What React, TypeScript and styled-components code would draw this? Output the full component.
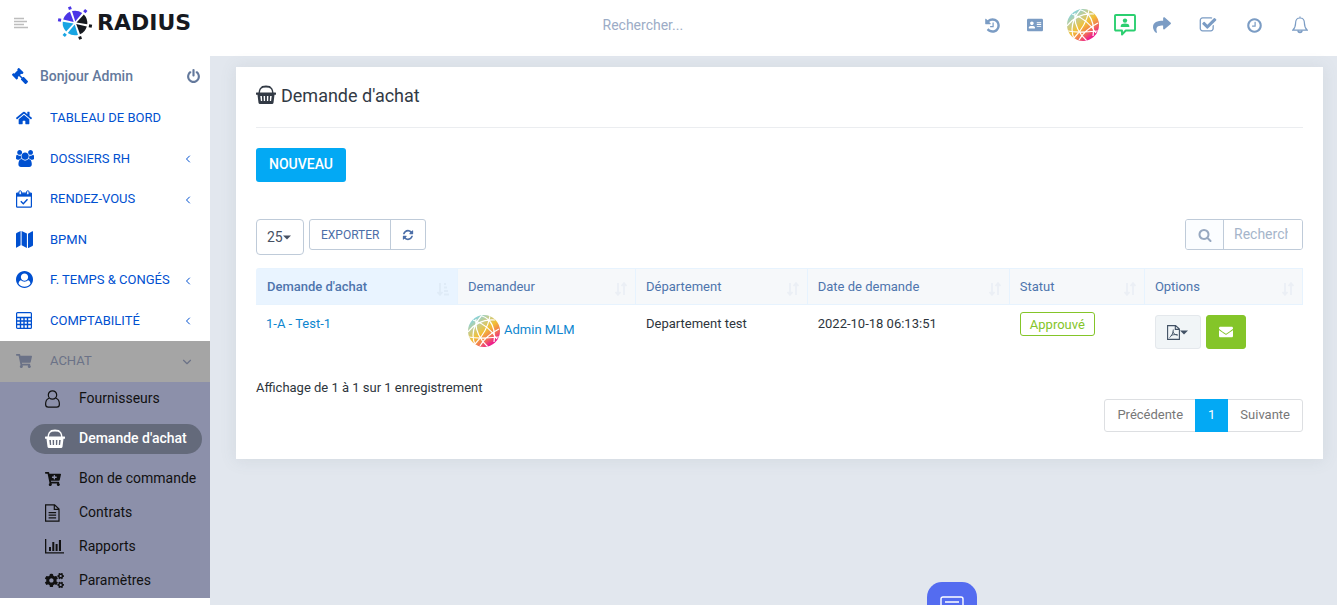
import React from "react";
import styled, { createGlobalStyle, css } from "styled-components";
import { FaGavel, FaShoppingCart, FaCartPlus, FaCogs, FaShare, FaAddressCard, FaHome, FaEnvelope } from "react-icons/fa";
import { FiChevronLeft, FiChevronDown } from "react-icons/fi";

const GlobalStyle = createGlobalStyle`
  *, *::before, *::after { box-sizing: border-box; }
  html { overflow: hidden; }
  body { margin: 0; background: #e2e7ee; color: #2d353c; font: 13px/1.5 Roboto, "Liberation Sans", sans-serif; }
  button, input, select { font: inherit; margin: 0; }
  button { cursor: pointer; }
  a { text-decoration: none; color: inherit; }
  ul { list-style: none; margin: 0; padding: 0; }
  svg { display: block; flex: none; }
`;

/* ---------- glyphs ---------- */

const Glyph = ({ d, size, box = 1792 }: { d: string; size: number; box?: number }) => (
  <svg width={(size * box) / 1792} height={size} viewBox={`0 0 ${box} 1792`} fill="currentColor" fillRule="evenodd" aria-hidden="true">
    <path d={d} />
  </svg>
);

const paths = {
  search:
    "M1216 832q0-185-131.5-316.5t-316.5-131.5-316.5 131.5-131.5 316.5 131.5 316.5 316.5 131.5 316.5-131.5 131.5-316.5zm512 832q0 52-38 90t-90 38q-54 0-90-38l-343-342q-179 124-399 124-143 0-273.5-55.5t-225-150-150-225-55.5-273.5 55.5-273.5 150-225 225-150 273.5-55.5 273.5 55.5 225 150 150 225 55.5 273.5q0 220-124 399l343 343q37 37 37 90z",
  refresh:
    "M1639 1056q0 5-1 7-64 268-268 434.5t-478 166.5q-146 0-282.5-55t-243.5-157l-129 129q-19 19-45 19t-45-19-19-45v-448q0-26 19-45t45-19h448q26 0 45 19t19 45-19 45l-137 137q71 66 161 102t187 36q134 0 250-65t186-179q11-17 53-117 8-23 30-23h192q13 0 22.5 9.5t9.5 22.5zm25-800v448q0 26-19 45t-45 19h-448q-26 0-45-19t-19-45 19-45l138-138q-148-137-349-137-134 0-250 65t-186 179q-11 17-53 117-8 23-30 23h-199q-13 0-22.5-9.5t-9.5-22.5v-7q65-268 270-434.5t480-166.5q146 0 284 55.5t245 156.5l130-129q19-19 45-19t45 19 19 45z",
  check:
    "M1472 930v318q0 119-84.5 203.5t-203.5 84.5h-832q-119 0-203.5-84.5t-84.5-203.5v-832q0-119 84.5-203.5t203.5-84.5h832q63 0 117 25 15 7 18 23 3 17-9 29l-49 49q-10 10-23 10-3 0-9-2-23-6-45-6h-832q-66 0-113 47t-47 113v832q0 66 47 113t113 47h832q66 0 113-47t47-113v-254q0-13 9-22l64-64q10-10 23-10 6 0 12 3 20 8 20 29zm231-489l-814 814q-24 24-57 24t-57-24l-430-430q-24-24-24-57t24-57l110-110q24-24 57-24t57 24l263 263 647-647q24-24 57-24t57 24l110 110q24 24 24 57t-24 57z",
  clock:
    "M1024 544v448q0 14-9 23t-23 9h-320q-14 0-23-9t-9-23v-64q0-14 9-23t23-9h224v-352q0-14 9-23t23-9h64q14 0 23 9t9 23zm416 352q0-148-73-273t-198-198-273-73-273 73-198 198-73 273 73 273 198 198 273 73 273-73 198-198 73-273zm224 0q0 209-103 385.5t-279.5 279.5-385.5 103-385.5-103-279.5-279.5-103-385.5 103-385.5 279.5-279.5 385.5-103 385.5 103 279.5 279.5 103 385.5z",
  history:
    "M1664 896q0 156-61 298t-164 245-245 164-298 61q-172 0-327-72.5t-264-204.5q-7-10-6.5-22.5t8.5-20.5l137-138q10-9 25-9 16 2 23 12 73 95 179 147t225 52q104 0 198.5-40.5t163.5-109.5 109.5-163.5 40.5-198.5-40.5-198.5-109.5-163.5-163.5-109.5-198.5-40.5q-98 0-188 35.5t-160 101.5l137 138q31 30 14 69-17 40-59 40h-448q-26 0-45-19t-19-45v-448q0-42 40-59 39-17 69 14l130 129q107-101 244.5-156.5t284.5-55.5q156 0 298 61t245 164 164 245 61 298zm-640-288v448q0 14-9 23t-23 9h-320q-14 0-23-9t-9-23v-64q0-14 9-23t23-9h224v-352q0-14 9-23t23-9h64q14 0 23 9t9 23z",
  power:
    "M1664 896q0 156-61 298t-164 245-245 164-298 61-298-61-245-164-164-245-61-298q0-182 80.5-343t226.5-270q43-32 95.5-25t83.5 50q32 42 24.5 94.5t-49.5 84.5q-98 74-151.5 181t-53.5 228q0 104 40.5 198.5t109.5 163.5 163.5 109.5 198.5 40.5 198.5-40.5 163.5-109.5 109.5-163.5 40.5-198.5q0-121-53.5-228t-151.5-181q-42-32-49.5-84.5t24.5-94.5q31-43 84-50t95 25q146 109 226.5 270t80.5 343zm-640-768v640q0 52-38 90t-90 38-90-38-38-90v-640q0-52 38-90t90-38 90 38 38 90z",
  users:
    "M593 896q-162 5-265 128h-134q-82 0-138-40.5t-56-118.5q0-353 124-353 6 0 43.5 21t97.500 42.500 119 21.500q67 0 133-23-5 37-5 66 0 139 81 256zm1071 637q0 120-73 189.500t-194 69.500h-874q-121 0-194-69.500t-73-189.500q0-53 3.500-103.500t14-109 26.500-108.500 43-97.500 62-81 85.500-53.500 111.500-20q10 0 43 21.500t73 48 107 48 135 21.500 135-21.500 107-48 73-48 43-21.500q61 0 111.500 20t85.500 53.500 62 81 43 97.500 26.500 108.500 14 109 3.500 103.500zm-1024-1277q0 106-75 181t-181 75-181-75-75-181 75-181 181-75 181 75 75 181zm704 384q0 159-112.500 271.500t-271.500 112.500-271.500-112.500-112.500-271.500 112.500-271.500 271.500-112.500 271.500 112.500 112.500 271.500zm576 225q0 78-56 118.500t-138 40.500h-134q-103-123-265-128 81-117 81-256 0-29-5-66 66 23 133 23 59 0 119-21.500t97.500-42.500 43.500-21q124 0 124 353zm-128-609q0 106-75 181t-181 75-181-75-75-181 75-181 181-75 181 75 75 181z",
  userCircle:
    "M1523 1339q-22-155-87.5-257.5t-184.5-118.5q-67 74-159.5 115.5t-195.5 41.5-195.5-41.5-159.5-115.5q-119 16-184.5 118.5t-87.5 257.5q106 150 271 237.5t356 87.5 356-87.5 271-237.5zm-243-699q0-159-112.5-271.5t-271.5-112.5-271.5 112.5-112.5 271.5 112.5 271.5 271.5 112.5 271.5-112.5 112.5-271.5zm512 256q0 182-71 347.5t-190.5 286-285.5 191.5-349 71-349-71-285.5-191.5-190.5-286-71-347.5 71-348 191-286 286-191 348-71 348 71 286 191 191 286 71 348z",
};

const Caret = () => (
  <svg width="8" height="5" viewBox="0 0 8 5" fill="currentColor" aria-hidden="true"><path d="M0 .5h8l-4 4Z" /></svg>
);

const Basket = () => (
  <svg width="20" height="20" viewBox="0 0 20 20" fill="none" aria-hidden="true">
    <path d="M3.2 8C3.4 4.6 4.4 2.6 6.6 2.2M16.8 8c-.2-3.400-1.200-5.400-3.400-5.800" stroke="currentColor" strokeWidth="1.400" />
    <path d="M6.500 1.900Q10 .9 13.500 1.900" stroke="currentColor" strokeWidth="2" strokeLinecap="round" />
    <path fillRule="evenodd" fill="currentColor" d="M.5 7.500h19q.5 0 .5.500v1.200q0 .5-.5.500h-1l-1 8q-.2 1.300-1.500 1.300H4q-1.300 0-1.500-1.300l-1-8h-1Q0 9.700 0 9.200V8q0-.5.5-.5ZM4.300 11l.6 5h1.300l-.3-5Zm3.300 0 .2 5h1.300v-5Zm3.300 0v5h1.300l.2-5Zm3.200 0-.3 5h1.300l.6-5Z" />
  </svg>
);

const PersonOutline = () => (
  <svg width="16" height="18" viewBox="0 0 16 18" fill="none" stroke="currentColor" strokeWidth="1.200" aria-hidden="true">
    <circle cx="7.500" cy="5" r="4.200" />
    <path d="M4 8.200C1.600 9 .6 11.500.6 14.200c0 2 1 3 2.700 3h8.400c1.700 0 2.700-1 2.700-3 0-2.700-1-5.200-3.400-6" />
  </svg>
);

const CalendarCheck = () => (
  <svg width="16" height="18" viewBox="0 0 16 18" fill="none" stroke="currentColor" aria-hidden="true">
    <rect x=".6" y="3" width="14.800" height="14.200" rx=".8" strokeWidth="1.200" />
    <path d="M.6 3.600h14.800v2.600H.6Z" fill="currentColor" strokeWidth=".8" />
    <rect x="3" y=".8" width="2.400" height="4" rx="1" fill="#fff" />
    <rect x="10.600" y=".8" width="2.400" height="4" rx="1" fill="#fff" />
    <path d="m4.800 11.300 2.500 2.500 4.200-4.500" strokeWidth="1.400" />
  </svg>
);

const MapFold = () => (
  <svg width="17" height="17" viewBox="0 0 17 17" fill="currentColor" aria-hidden="true">
    <path d="M4.600 0v14.300L.7 16.600Q0 17 0 16.200V3q0-.6.500-.9ZM5.600 0l5.300 2.600V17l-5.300-2.700ZM12 2.700 16.300.300Q17-.1 17 .8v13.200q0 .6-.5.900L12 17.200Z" />
  </svg>
);

const Calculator = () => (
  <svg width="16" height="17" viewBox="0 0 16 17" fill="none" stroke="currentColor" aria-hidden="true">
    <rect x=".6" y=".6" width="14.800" height="15.800" rx="1" strokeWidth="1.200" />
    <path d="M1 5.500h14M1 9h14M1 12.500h14M4.500 5v11M8 5v11M11.500 5v11" strokeWidth="1.400" />
  </svg>
);

const FileText = () => (
  <svg width="15" height="18" viewBox="0 0 15 18" fill="none" stroke="currentColor" strokeWidth="1.200" aria-hidden="true">
    <path d="M.6.800h9L14 5v12.200H.6ZM9.300.800V5.300H14M3.600 8.600h7.500M3.600 11.200h7.500M3.600 13.800h7.500" />
  </svg>
);

const FilePdf = () => (
  <svg width="13" height="15" viewBox="0 0 13 15" fill="none" stroke="currentColor" strokeWidth="1.100" aria-hidden="true">
    <path d="M.6.600h8L12.400 4v10.400H.6ZM8.300.600v3.800h4" />
    <path d="M2.500 12.500c2-1 4-5 3.800-8M6 6.500c.5 2 2 3.800 5 3.600M3.800 10.600c2-.9 4-1.200 6.500-1" strokeWidth=".9" />
  </svg>
);

const Bars = () => (
  <svg width="20" height="16" viewBox="0 0 20 16" fill="currentColor" aria-hidden="true">
    <path d="M0 0h1.300v13.200H19v1.300H0ZM4 8h2v4H4Zm3.300-5h2v9h-2Zm3.300 2h2v7h-2Zm3.300-4H16v11h-2.100Z" />
  </svg>
);

const Bell = () => (
  <svg width="16" height="18" viewBox="0 0 16 18" fill="none" stroke="currentColor" strokeWidth="1.200" aria-hidden="true">
    <path d="M8 .5v1.500M8 2C5 2 3.600 4.200 3.600 7c0 4-1 5.500-2.900 7.200h14.600C13.400 12.500 12.400 11 12.400 7 12.400 4.200 11 2 8 2Z" />
    <path d="M6.200 14.600a1.800 1.800 0 0 0 3.600 0" strokeWidth="1.800" />
  </svg>
);

const ContactBubble = () => (
  <svg width="22" height="22" viewBox="0 0 22 22" aria-hidden="true">
    <path fill="none" stroke="currentColor" strokeWidth="1.900" strokeLinejoin="round" d="M2 1h18q1 0 1 1v13.500q0 1-1 1h-8.200L8 20.500v-4H2q-1 0-1-1V2q0-1 1-1Z" />
    <circle cx="11" cy="6.600" r="2.200" fill="currentColor" />
    <path fill="currentColor" d="M6.700 13v-1c0-1.700 2-2.400 4.300-2.400s4.300.7 4.300 2.400v1Z" />
  </svg>
);

const Lines = () => (
  <svg width="14" height="12" viewBox="0 0 14 12" fill="none" stroke="#bdbdbd" strokeWidth="1.500" aria-hidden="true">
    <path d="M0 1.500h10M0 4.500h13M0 7.500h10M0 10.500h14" />
  </svg>
);

const Globe = () => (
  <svg width="32" height="32" viewBox="0 0 32 32" aria-hidden="true">
    <defs>
      <linearGradient id="globe" x1=".15" y1=".1" x2=".8" y2=".95">
        <stop offset="0" stopColor="#7fd3e6" />
        <stop offset=".25" stopColor="#c5cd90" />
        <stop offset=".5" stopColor="#f2c035" />
        <stop offset=".72" stopColor="#f27a50" />
        <stop offset=".92" stopColor="#ed1e8c" />
      </linearGradient>
      <clipPath id="disc"><circle cx="16" cy="16" r="16" /></clipPath>
    </defs>
    <circle cx="16" cy="16" r="16" fill="url(#globe)" />
    <g clipPath="url(#disc)" fill="none" stroke="#fff" strokeWidth="1.200">
      <path d="M0 17C6 9 15 4 27 5M14 0C5 10 3 20 7 30M14 1c9 3 14 12 12 26M1 22c9 2 20 1 30 0M22 1C20 12 14 22 7 29M5 5c9 3 18 9 24 19M8 4C7 14 10 23 20 32M31 14c-8 4-15 10-19 17" />
    </g>
  </svg>
);

/* Six sectors, two per brand colour, with a small square at the end of each spoke. */
const spokes = [
  { angle: 191, fill: "#4b35e6" },
  { angle: 251, fill: "#4b35e6" },
  { angle: 311, fill: "#16191f" },
  { angle: 11, fill: "#16191f" },
  { angle: 71, fill: "#18a5e3" },
  { angle: 131, fill: "#18a5e3" },
];
const dotFills = ["#4b35e6", "#4b35e6", "#4b35e6", "#16191f", "#16191f", "#18a5e3"];
const polar = (r: number, deg: number) => {
  const a = (deg * Math.PI) / 180;
  return `${18 + r * Math.cos(a)} ${18 + r * Math.sin(a)}`;
};
const Wheel = () => (
  <svg width="36" height="36" viewBox="0 0 36 36" aria-hidden="true">
    {spokes.map((s) => (
      <path key={s.angle} fill={s.fill} d={`M${polar(1.6, s.angle + 30)}L${polar(12.3, s.angle + 5)}A12.300 12.300 0 0 1 ${polar(12.3, s.angle + 55)}Z`} />
    ))}
    {spokes.map((s, i) => (
      <rect key={s.angle} x="14.200" y="-1.500" width="3" height="3" fill={dotFills[i]} transform={`translate(18 18) rotate(${s.angle})`} />
    ))}
  </svg>
);

const SortBoth = () => (
  <svg width="12" height="14" viewBox="0 0 12 14" fill="none" stroke="#ebeff5" strokeWidth="1.800" aria-hidden="true">
    <path d="M3 1v11M.5 10 3 12.800 5.500 10M9 13V2M6.500 4 9 1.200 11.500 4" />
  </svg>
);
const SortAsc = () => (
  <svg width="12" height="14" viewBox="0 0 12 14" fill="none" stroke="#dfebf7" strokeWidth="1.800" aria-hidden="true">
    <path d="M3 1v11M.5 10 3 12.800 5.500 10M7 2h2M7 5.500h3M7 9h4M7 12.500h5" />
  </svg>
);

/* ---------- header ---------- */

const Header = styled.header`
  display: grid;
  grid-template-columns: 1fr 156px 1fr;
  align-items: center;
  height: 56px;
  background: #fff;
`;
const Brand = styled.div`
  display: flex;
  align-items: center;
  gap: 29px;
  padding: 0 0 10px 14px;
`;
const PlainButton = styled.button`
  display: flex;
  align-items: center;
  justify-content: center;
  padding: 0;
  border: 0;
  background: none;
  color: inherit;
`;
const Logo = styled.a`
  display: flex;
  align-items: center;
  gap: 4px;
  color: #16191f;
  font: 700 22px/24px "DejaVu Sans", sans-serif;
`;
const HeaderSearch = styled.input`
  width: 100%;
  height: 36px;
  margin-bottom: 6px;
  padding: 0 12px;
  border: 0;
  font-size: 14px;
  color: #415165;
  &::placeholder { color: #9cacc6; opacity: 1; }
`;
const Tools = styled.nav`
  display: flex;
  justify-content: flex-end;
  padding: 0 14px 6px 0;
`;
const Tool = styled(PlainButton)<{ $w?: number; $green?: boolean }>`
  width: ${(p) => p.$w ?? 46}px;
  height: 32px;
  color: ${(p) => (p.$green ? "#2bcf70" : "#7b9cc4")};
`;

/* ---------- sidebar ---------- */

const Body = styled.div`
  display: flex;
  align-items: stretch;
  min-height: calc(100vh - 56px);
`;
const Sidebar = styled.aside`
  flex: none;
  width: 210px;
  background: #fff;
  color: #0050d0;
`;
const Welcome = styled.div`
  display: flex;
  align-items: center;
  height: 42px;
  padding: 0 9px 2px 12px;
  font-size: 14px;
  font-weight: 500;
  color: #64799c;
  & > svg { color: #0050d0; transform: scaleX(-1); }
  & > span { flex: 1; margin-left: 12px; }
`;
const NavLink = styled.a<{ $open?: boolean }>`
  display: flex;
  align-items: center;
  padding: 10px 16px 11px;
  ${(p) => p.$open && css`background: #a5a5a5; color: #6b7287;`}
  & > b { flex: 1; font-weight: 400; }
  & > svg { margin-top: 2px; }
`;
const IconSlot = styled.span`
  display: flex;
  align-items: center;
  flex: none;
  width: 34px;
  height: 18px;
`;
const SubMenu = styled.ul`
  background: #8c90aa;
`;
const SubLink = styled.a<{ $active?: boolean }>`
  display: flex;
  align-items: center;
  height: 34px;
  padding-left: 45px;
  font-size: 14px;
  color: #111;
  white-space: nowrap;
  ${(p) => p.$active && css`
    height: 30px;
    margin: 8px 8px 8px 30px;
    padding-left: 15px;
    border-radius: 15px;
    background: #646a7b;
    color: #fff;
    font-weight: 500;
  `}
`;

/* ---------- content ---------- */

const Main = styled.main`
  flex: 1;
  min-width: 0;
  padding: 11px 14px 27px 26px;
`;
const Card = styled.section`
  padding: 0 20px 27px;
  background: #fff;
  box-shadow: 0 1px 15px 1px rgba(90, 110, 120, 0.1);
`;
const Title = styled.h1`
  display: flex;
  align-items: center;
  gap: 5px;
  height: 61px;
  margin: 0 0 20px;
  padding-bottom: 4px;
  border-bottom: 1px solid #ebedf0;
  font-size: 18px;
  font-weight: 400;
  color: #323a45;
`;
const NewButton = styled.button`
  height: 34px;
  padding: 0 13px 2px;
  border: 0;
  border-radius: 3px;
  background: #03a9f4;
  color: #fff;
  font-size: 14px;
  font-weight: 500;
`;
const Toolbar = styled.div`
  display: flex;
  align-items: flex-start;
  gap: 5px;
  margin: 37px 0 13px;
`;
const Length = styled.div`
  display: grid;
  align-items: center;
  width: 48px;
  height: 36px;
  border: 1px solid #bfcbd9;
  border-radius: 4px;
  color: #475163;
  & > * { grid-area: 1 / 1; }
  & > svg { justify-self: end; margin-right: 12px; pointer-events: none; }
`;
const LengthSelect = styled.select`
  appearance: none;
  width: 100%;
  height: 100%;
  padding: 0 0 0 10px;
  border: 0;
  background: none;
  color: inherit;
  font-size: 14px;
`;
const Group = styled.div<{ $end?: boolean }>`
  display: flex;
  height: 31px;
  margin-left: ${(p) => (p.$end ? "auto" : 0)};
  border: 1px solid #bfcbd9;
  border-radius: 3px;
  overflow: hidden;
`;
const GroupButton = styled(PlainButton)`
  padding: 0 11px;
  color: #4b6ea8;
  font-size: 12px;
  & + & { border-left: 1px solid #bfcbd9; }
`;
const SearchLabel = styled.label`
  display: flex;
  align-items: center;
  justify-content: center;
  width: 38px;
  border-right: 1px solid #bfcbd9;
  background: #fbfdff;
  color: #97a8c0;
`;
const SearchInput = styled.input`
  width: 78px;
  padding: 0 14px 0 10px;
  border: 0;
  font-size: 14px;
  &::placeholder { color: #a5b5ca; opacity: 1; }
`;
const Table = styled.table`
  width: 100%;
  table-layout: fixed;
  border-collapse: separate;
  border-spacing: 0;
`;
const Th = styled.th<{ $w: string; $sorted?: boolean }>`
  width: ${(p) => p.$w};
  height: 37px;
  padding: 0 8px 0 10px;
  border: solid #e7f3fe;
  border-width: 1px 1px 1px 0;
  background: ${(p) => (p.$sorted ? "#e9f4ff" : "#f6f8fa")};
  color: #4e75ad;
  font-weight: ${(p) => (p.$sorted ? 500 : 400)};
  text-align: left;
  &:first-child { padding-left: 11px; border-radius: 3px 0 0 0; }
`;
const HeadCell = styled.div`
  display: flex;
  align-items: center;
  justify-content: space-between;
  & > svg { margin-top: 4px; }
`;
const Td = styled.td<{ $top?: number }>`
  height: 54px;
  padding: ${(p) => p.$top ?? 9}px 10px 0;
  vertical-align: top;
`;
const TableLink = styled.a`
  color: #0d86cf;
`;
const Person = styled(TableLink)`
  display: flex;
  align-items: center;
  gap: 4px;
  & > span { margin-top: -3px; }
`;
const Status = styled.span`
  display: inline-block;
  height: 24px;
  padding: 0 9px;
  border: 1px solid #84c529;
  border-radius: 3px;
  color: #84c529;
  line-height: 23px;
`;
const Actions = styled.div`
  display: flex;
  gap: 5px;
`;
const ActionButton = styled(PlainButton)<{ $green?: boolean }>`
  width: ${(p) => (p.$green ? 40 : 46)}px;
  height: 34px;
  border: 1px solid ${(p) => (p.$green ? "#84c529" : "#e4e8ec")};
  border-radius: 3px;
  background: ${(p) => (p.$green ? "#84c529" : "#f1f5f7")};
  color: ${(p) => (p.$green ? "#fff" : "#415164")};
`;
const Info = styled.p`
  margin: 19px 0 1px;
  line-height: 20px;
`;
const Pager = styled.nav`
  display: flex;
  width: max-content;
  height: 33px;
  margin-left: auto;
  border: 1px solid #dddfe2;
  border-radius: 3px;
`;
const PageLink = styled.a<{ $current?: boolean }>`
  padding: 0 12px;
  line-height: 30px;
  color: #777;
  ${(p) => p.$current && css`
    margin: -1px 0;
    padding: 1px 13px;
    background: #03a9f4;
    color: #fff;
  `}
`;
const Chat = styled.button`
  position: fixed;
  left: 71.200%;
  bottom: -27px;
  display: flex;
  justify-content: center;
  width: 50px;
  height: 50px;
  margin-left: -25px;
  padding: 14px 0 0;
  border: 0;
  border-radius: 15px;
  background: #546cf0;
`;

const menu = [
  { label: "TABLEAU DE BORD", icon: <FaHome size={16} /> },
  { label: "DOSSIERS RH", icon: <Glyph d={paths.users} size={17} box={1920} />, more: true },
  { label: "RENDEZ-VOUS", icon: <CalendarCheck />, more: true },
  { label: "BPMN", icon: <MapFold /> },
  { label: "F. TEMPS & CONGÉS", icon: <Glyph d={paths.userCircle} size={17} />, more: true },
  { label: "COMPTABILITÉ", icon: <Calculator />, more: true },
];

const submenu = [
  { label: "Fournisseurs", icon: <PersonOutline /> },
  { label: "Demande d'achat", icon: <Basket />, active: true },
  { label: "Bon de commande", icon: <FaCartPlus size={16} /> },
  { label: "Contrats", icon: <FileText /> },
  { label: "Rapports", icon: <Bars /> },
  { label: "Paramètres", icon: <FaCogs size={19} /> },
];

const columns = [
  { label: "Demande d'achat", w: "19.300%", sorted: true },
  { label: "Demandeur", w: "17%" },
  { label: "Département", w: "16.400%" },
  { label: "Date de demande", w: "19.300%" },
  { label: "Statut", w: "12.900%" },
  { label: "Options", w: "15.100%" },
];

export default function App() {
  return (
    <>
      <GlobalStyle />
      <Header>
        <Brand>
          <PlainButton aria-label="Menu"><Lines /></PlainButton>
          <Logo href="#"><Wheel />RADIUS</Logo>
        </Brand>
        <HeaderSearch type="search" placeholder="Rechercher..." aria-label="Rechercher" />
        <Tools>
          <Tool aria-label="Historique"><Glyph d={paths.history} size={17} /></Tool>
          <Tool $w={40} aria-label="Contacts"><FaAddressCard size={16} /></Tool>
          <Tool $w={56} aria-label="Profil"><Globe /></Tool>
          <Tool $w={28} $green aria-label="Portail"><ContactBubble /></Tool>
          <Tool aria-label="Partager"><FaShare size={18} /></Tool>
          <Tool aria-label="Tâches"><Glyph d={paths.check} size={18} /></Tool>
          <Tool aria-label="Minuteur"><Glyph d={paths.clock} size={17} /></Tool>
          <Tool aria-label="Notifications"><Bell /></Tool>
        </Tools>
      </Header>
      <Body>
        <Sidebar>
          <Welcome>
            <FaGavel size={16} />
            <span>Bonjour Admin</span>
            <PlainButton aria-label="Déconnexion"><Glyph d={paths.power} size={15} /></PlainButton>
          </Welcome>
          <nav>
            {menu.map((m) => (
              <NavLink href="#" key={m.label}>
                <IconSlot>{m.icon}</IconSlot>
                <b>{m.label}</b>
                {m.more && <FiChevronLeft size={12} />}
              </NavLink>
            ))}
            <NavLink href="#" $open>
              <IconSlot><FaShoppingCart size={16} /></IconSlot>
              <b>ACHAT</b>
              <FiChevronDown size={14} />
            </NavLink>
            <SubMenu>
              {submenu.map((s) => (
                <li key={s.label}>
                  <SubLink href="#" $active={s.active}>
                    <IconSlot>{s.icon}</IconSlot>
                    {s.label}
                  </SubLink>
                </li>
              ))}
            </SubMenu>
          </nav>
        </Sidebar>
        <Main>
          <Card>
            <Title><Basket />Demande d'achat</Title>
            <NewButton>NOUVEAU</NewButton>
            <Toolbar>
              <Length>
                <LengthSelect aria-label="Lignes par page" defaultValue="25">
                  <option>25</option>
                  <option>50</option>
                </LengthSelect>
                <Caret />
              </Length>
              <Group>
                <GroupButton>EXPORTER</GroupButton>
                <GroupButton aria-label="Actualiser"><Glyph d={paths.refresh} size={12} /></GroupButton>
              </Group>
              <Group $end>
                <SearchLabel htmlFor="table-search" aria-label="Rechercher"><Glyph d={paths.search} size={14} /></SearchLabel>
                <SearchInput id="table-search" placeholder="Rechercher..." />
              </Group>
            </Toolbar>
            <Table>
              <thead>
                <tr>
                  {columns.map((c) => (
                    <Th key={c.label} $w={c.w} $sorted={c.sorted} scope="col">
                      <HeadCell>{c.label}{c.sorted ? <SortAsc /> : <SortBoth />}</HeadCell>
                    </Th>
                  ))}
                </tr>
              </thead>
              <tbody>
                <tr>
                  <Td><TableLink href="#">1-A - Test-1</TableLink></Td>
                  <Td $top={10}><Person href="#"><Globe /><span>Admin MLM</span></Person></Td>
                  <Td>Departement test</Td>
                  <Td>2022-10-18 06:13:51</Td>
                  <Td $top={7}><Status>Approuvé</Status></Td>
                  <Td $top={10}>
                    <Actions>
                      <ActionButton aria-label="PDF"><FilePdf /><Caret /></ActionButton>
                      <ActionButton $green aria-label="Envoyer"><FaEnvelope size={14} /></ActionButton>
                    </Actions>
                  </Td>
                </tr>
              </tbody>
            </Table>
            <Info>Affichage de 1 à 1 sur 1 enregistrement</Info>
            <Pager aria-label="Pagination">
              <PageLink href="#">Précédente</PageLink>
              <PageLink href="#" $current>1</PageLink>
              <PageLink href="#">Suivante</PageLink>
            </Pager>
          </Card>
        </Main>
      </Body>
      <Chat aria-label="Discussion">
        <svg width="24" height="22" viewBox="0 0 24 22" fill="none" stroke="#fff" strokeWidth="1.400">
          <path d="M3 1h18q2 0 2 2v12q0 2-2 2H9l-5 4v-4H3q-2 0-2-2V3q0-2 2-2ZM5 6h14M5 10h14" />
        </svg>
      </Chat>
    </>
  );
}
